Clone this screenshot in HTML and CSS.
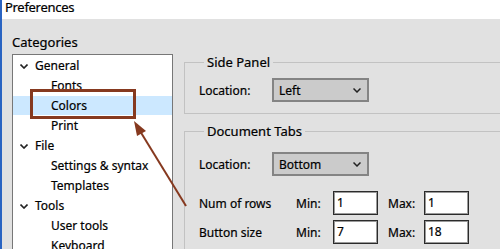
FILE: index.html
```html
<!DOCTYPE html>
<html lang="en">
<head>
    <meta charset="UTF-8">
    <title>Preferences</title>
    <link rel="stylesheet" href="styles.css">
</head>
<body>

<div class="window">
    <div class="titlebar">Preferences</div>

    <div class="content">
        <!-- Columna izquierda: arbol de categorias -->
        <div class="categories">
            <div class="cat-label">Categories</div>
            <ul class="tree">
                <li class="node"><svg class="chev" viewBox="0 0 8 5"><polyline points="0.5,0.5 4,4 7.5,0.5"/></svg>General</li>
                <li class="leaf">Fonts</li>
                <li class="leaf selected">Colors</li>
                <li class="leaf">Print</li>
                <li class="node"><svg class="chev" viewBox="0 0 8 5"><polyline points="0.5,0.5 4,4 7.5,0.5"/></svg>File</li>
                <li class="leaf">Settings &amp; syntax</li>
                <li class="leaf">Templates</li>
                <li class="node"><svg class="chev" viewBox="0 0 8 5"><polyline points="0.5,0.5 4,4 7.5,0.5"/></svg>Tools</li>
                <li class="leaf">User tools</li>
                <li class="leaf">Keyboard</li>
            </ul>
        </div>

        <!-- Columna derecha: opciones -->
        <div class="settings">
            <fieldset class="group side-panel">
                <legend>Side Panel</legend>
                <div class="row">
                    <span class="label">Location:</span>
                    <div class="combo"><span>Left</span><svg class="combo-arrow" viewBox="0 0 8 5"><polyline points="0.5,0.5 4,4 7.5,0.5"/></svg></div>
                </div>
            </fieldset>

            <fieldset class="group doc-tabs">
                <legend>Document Tabs</legend>
                <div class="row">
                    <span class="label">Location:</span>
                    <div class="combo"><span>Bottom</span><svg class="combo-arrow" viewBox="0 0 8 5"><polyline points="0.5,0.5 4,4 7.5,0.5"/></svg></div>
                </div>
                <div class="range-row first">
                    <span class="range-label">Num of rows</span>
                    <span class="min-label">Min:</span>
                    <div class="num">1</div>
                    <span class="max-label">Max:</span>
                    <div class="num">1</div>
                </div>
                <div class="range-row">
                    <span class="range-label">Button size</span>
                    <span class="min-label">Min:</span>
                    <div class="num">7</div>
                    <span class="max-label">Max:</span>
                    <div class="num">18</div>
                </div>
            </fieldset>
        </div>
    </div>

    <!-- Anotacion sobre la captura -->
    <div class="mark"></div>
    <svg class="arrow" viewBox="0 0 500 249">
        <line x1="186" y1="206" x2="140" y2="131"/>
        <polygon points="134,121 146,131 137,136"/>
    </svg>
</div>

</body>
</html>
```

FILE: styles.css
```css
body {
    margin: 0;
    font-family: 'Noto Sans', 'DejaVu Sans', sans-serif;
    font-size: 12px;
    color: #000;
    background-color: #e1e1e1;
    overflow: hidden;
    -webkit-text-stroke: 0.2px #000;
}
.window {
    position: relative;
    width: 500px;
    height: 249px;
    border-left: 2px solid #2a64c2;
    box-sizing: border-box;
    overflow: hidden;
}
.titlebar {
    height: 19px;
    line-height: 15px;
    padding-left: 3px;
    background-color: #fff;
    font-size: 13px;
    letter-spacing: -0.3px;
}

.content {
    display: flex;
    align-items: flex-start;
}

/* Arbol de categorias */
.categories {
    padding: 15px 0 0 10px;
}
.cat-label {
    height: 16px;
    line-height: 16px;
    font-size: 13px;
    margin-bottom: 4px;
}
.tree {
    list-style: none;
    margin: 0;
    padding: 1px 0 0;
    width: 159px;
    height: 220px;
    border: 1px solid #777;
    background-color: #fff;
}
.tree li {
    height: 20px;
    line-height: 20px;
    white-space: nowrap;
}
.tree .node {
    display: flex;
    align-items: center;
    padding-left: 7px;
}
.tree .leaf {
    padding-left: 38px;
}
.tree .selected {
    background-color: #cce8ff;
    height: 19px;
    margin-bottom: 1px;
}
.chev {
    width: 8px;
    height: 5px;
    margin-right: 7px;
    fill: none;
    stroke: #222;
    stroke-width: 1.6;
}

/* Grupos de opciones */
.settings {
    padding-top: 35px;
    margin-left: 11px;
    width: 340px;
    flex: none;
}
.group {
    margin: 0;
    border: 1px solid #c2c2c2;
    padding: 0 0 0 14px;
}
.group legend {
    padding: 0 3px;
    margin-left: 5px;
    height: 16px;
    line-height: 16px;
    font-size: 13px;
}
.side-panel {
    padding-top: 8px;
    padding-bottom: 11px;
    margin-bottom: 9px;
}
.doc-tabs {
    padding-top: 13px;
    padding-bottom: 20px;
}
.row {
    display: flex;
    align-items: center;
}
.label {
    width: 73px;
}
.combo {
    display: flex;
    align-items: center;
    justify-content: space-between;
    width: 82px;
    height: 20px;
    padding: 0 6px 0 5px;
    border: 2px solid #848484;
    background-color: #cbcbcb;
    box-sizing: content-box;
}
.combo-arrow {
    width: 8px;
    height: 5px;
    fill: none;
    stroke: #222;
    stroke-width: 1.5;
}

.range-row {
    display: flex;
    align-items: center;
    margin-top: 5px;
}
.range-row.first {
    margin-top: 15px;
}
.range-label {
    width: 97px;
}
.min-label {
    width: 37px;
}
.max-label {
    width: 36px;
    margin-left: 10px;
}
.num {
    width: 40px;
    height: 22px;
    line-height: 22px;
    padding-left: 3px;
    border: 1px solid #2b2b2b;
    box-shadow: inset 0 0 0 1px #9a9a9a;
    background-color: #fff;
}

/* Anotacion */
.mark {
    position: absolute;
    left: 28px;
    top: 89px;
    width: 100px;
    height: 24px;
    border: 3px solid #86391f;
}
.arrow {
    position: absolute;
    left: -2px;
    top: 0;
    width: 500px;
    height: 249px;
    pointer-events: none;
}
.arrow line {
    stroke: #86391f;
    stroke-width: 2;
}
.arrow polygon {
    fill: #86391f;
}
```
